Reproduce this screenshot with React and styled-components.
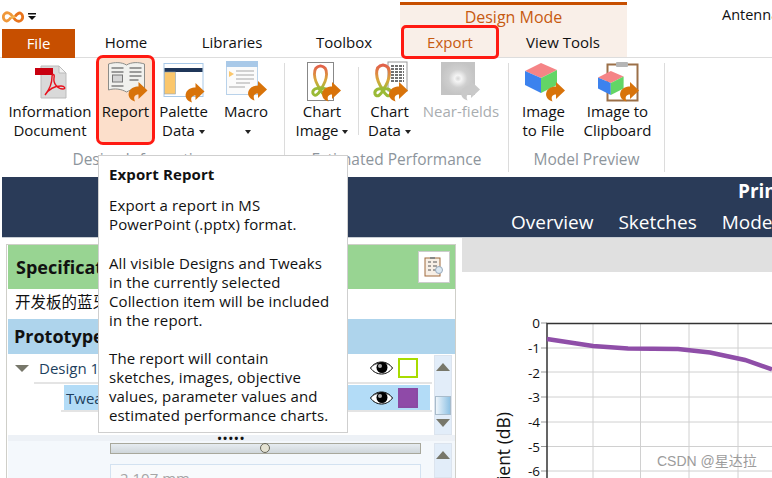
import React from 'react'
import styled, { createGlobalStyle } from 'styled-components'

const Global = createGlobalStyle`
  html, body { margin: 0; padding: 0; background: #fff; }
  body { font-family: "Open Sans", "Noto Sans CJK SC", sans-serif; color: #111; }
`

const Page = styled.div`
  position: relative;
  width: 772px;
  height: 478px;
  overflow: hidden;
  background: #fff;
`
const TitleBar = styled.div`
  height: 29px;
  display: flex;
  align-items: flex-start;
`
const QuickAccess = styled.div`
  flex: none;
  width: 400px;
  padding: 6px 0 0 2px;
  box-sizing: border-box;
`
const ContextHead = styled.div`
  flex: none;
  width: 227px;
  height: 24px;
  margin-top: 2px;
  border-top: 3px solid #c74f00;
  background: #f9efe8;
  color: #c75a10;
  font-size: 16px;
  line-height: 24px;
  text-align: center;
`
const AppName = styled.div`
  flex: none;
  margin: 5px 0 0 95px;
  font-size: 14.5px;
  line-height: 20px;
  white-space: nowrap;
`
const TabRow = styled.div`
  height: 28px;
  display: flex;
  border-bottom: 1px solid #ddd;
  padding-left: 2px;
`
const FileTab = styled.div`
  width: 73px;
  height: 29px;
  background: #c74f00;
  color: #fff;
  font-size: 15px;
  line-height: 28px;
  text-align: center;
`
const Tab = styled.div`
  position: relative;
  width: ${p => p.$w}px;
  font-size: 15px;
  line-height: 27px;
  text-align: center;
  white-space: nowrap;
  background: ${p => (p.$context ? '#f9efe8' : 'transparent')};
  color: ${p => (p.$current ? '#c75a10' : '#111')};
  ${p => p.$current && `
    &::after {
      content: "";
      position: absolute;
      left: 0; top: -4px; right: 0; bottom: -2px;
      border: 3px solid #ff1a12;
      border-radius: 5px;
    }
  `}
`
const Ribbon = styled.div`
  height: 114px;
  display: flex;
  padding-top: 4px;
  box-sizing: border-box;
`
const Group = styled.div`
  width: ${p => p.$w}px;
  display: flex;
  flex-direction: column;
  border-right: 1px solid #dcdcdc;
  box-sizing: border-box;
  margin-top: 1px;
`
const Buttons = styled.div`
  flex: 1;
  display: flex;
  padding-left: ${p => p.$pad || 0}px;
`
const GroupLabel = styled.div`
  height: 25px;
  color: #8d959c;
  font-size: 15.5px;
  line-height: 24px;
  text-align: center;
  white-space: nowrap;
`
const Btn = styled.div`
  position: relative;
  width: ${p => p.$w}px;
  margin-top: -1px;
  display: flex;
  flex-direction: column;
  align-items: center;
  ${p => p.$sep && `
    &::after {
      content: "";
      position: absolute;
      right: 0; top: 5px; height: 68px;
      border-right: 1px solid #dcdcdc;
    }
  `}
  ${p => p.$active && `
    &::before {
      content: "";
      position: absolute;
      left: 0; right: 0; top: -7px; height: 84px;
      background: #fcdfcb;
      border: 3px solid #ff1a12;
      border-radius: 7px;
    }
  `}
`
const IconBox = styled.div`
  position: relative;
  height: 40px;
`
const BtnLabel = styled.div`
  position: relative;
  font-size: 15px;
  line-height: 19px;
  text-align: center;
  white-space: nowrap;
  color: ${p => (p.$disabled ? '#a9adb0' : '#111')};
`
const Caret = styled.span`
  display: inline-block;
  width: 0;
  height: 0;
  margin-left: 4px;
  vertical-align: 2px;
  border-left: 3px solid transparent;
  border-right: 3px solid transparent;
  border-top: 4px solid #222;
`
const Band = styled.div`
  margin: 5px 0 0 2px;
  height: 60px;
  background: #2a3b58;
  color: #fff;
  overflow: hidden;
  border-bottom: 1px solid #c8cdd4;
`
const BandTitle = styled.div`
  padding: 2px 0 0 736px;
  font-size: 19px;
  font-weight: 700;
  line-height: 25px;
  white-space: nowrap;
`
const BandNav = styled.div`
  display: flex;
  gap: 25px;
  padding: 5px 0 0 509px;
  font-size: 19px;
  line-height: 26px;
  white-space: nowrap;
`
const Main = styled.div`
  display: flex;
  height: 240px;
`
const LeftPanel = styled.div`
  flex: none;
  width: 450px;
  margin: 6px 0 0 6px;
  border: 1px solid #cfcfc9;
  border-width: 1px 1px 0;
  box-sizing: border-box;
  display: flex;
  flex-direction: column;
  padding-left: 1px;
`
const SpecHead = styled.div`
  flex: none;
  height: 44px;
  background: #98d492;
  display: flex;
  align-items: center;
  justify-content: space-between;
  padding: 0 5px 0 8px;
  font-size: 18px;
  font-weight: 700;
`
const SpecButton = styled.div`
  width: 30px;
  height: 30px;
  border: 1px solid #ccc;
  background: #fff;
  display: flex;
  align-items: center;
  justify-content: center;
`
const SpecText = styled.div`
  flex: none;
  height: 30px;
  padding-left: 7px;
  font-size: 15.5px;
  line-height: 26px;
  white-space: nowrap;
`
const ProtoHead = styled.div`
  flex: none;
  height: 35px;
  background: #aed4ec;
  padding-left: 6px;
  font-size: 18px;
  font-weight: 700;
  line-height: 34px;
`
const TreeArea = styled.div`
  flex: none;
  height: 81px;
  display: flex;
`
const Tree = styled.div`
  flex: 1;
  padding-right: 1px;
`
const Row = styled.div`
  display: flex;
  align-items: center;
  height: ${p => p.$h}px;
  margin-left: ${p => p.$indent}px;
  padding: ${p => p.$pad};
  border-bottom: 2px solid #e4e4e4;
  color: #1d3f5e;
  font-size: 15px;
`
const RowFill = styled.div`
  flex: 1;
  display: flex;
  align-items: center;
  height: 100%;
  padding-left: ${p => p.$pl}px;
  background: ${p => (p.$selected ? '#b3dcf7' : 'transparent')};
`
const Expander = styled.span`
  width: 0;
  height: 0;
  margin: 0 10px 0 -24px;
  border-left: 7px solid transparent;
  border-right: 7px solid transparent;
  border-top: 7px solid #77776a;
`
const Grow = styled.span`
  flex: 1;
`
const Swatch = styled.span`
  width: 16px;
  height: 16px;
  margin: 0 12px 0 5px;
  border: 2px solid ${p => p.$border};
  background: ${p => p.$fill};
`
const Scroll = styled.div`
  flex: none;
  width: 16px;
  margin: ${p => p.$margin};
  border: 1px solid #dce4ee;
  background: #e2edf9;
  display: flex;
  flex-direction: column;
  align-items: center;
  justify-content: ${p => (p.$top ? 'flex-start' : 'space-between')};
  padding: 7px 0;
`
const ArrowUp = styled.span`
  width: 0;
  height: 0;
  border-left: 7px solid transparent;
  border-right: 7px solid transparent;
  border-bottom: 8px solid #77776a;
`
const ArrowDown = styled(ArrowUp)`
  border-bottom: 0;
  border-top: 8px solid #77776a;
`
const Thumb = styled.span`
  width: 14px;
  height: 17px;
  margin-top: 20px;
  border: 1px solid #a9bccb;
  background: linear-gradient(to right, #eef5fb, #8fc2e4);
`
const Splitter = styled.div`
  flex: none;
  height: 6px;
  background: #edf1f6;
  text-align: center;
  font-size: 11px;
  font-weight: 700;
  line-height: 5px;
  letter-spacing: 1.5px;
  overflow: hidden;
`
const Lower = styled.div`
  flex: 1;
  display: flex;
  background: #f4f8fc;
  min-height: 0;
`
const LowerBody = styled.div`
  flex: 1;
  padding: 2px 0 0 102px;
`
const Slider = styled.div`
  position: relative;
  width: 309px;
  height: 9px;
  border: 1px solid #a8a89c;
  background: linear-gradient(#e6ecf1, #cfd6da);
`
const SliderKnob = styled.span`
  position: absolute;
  left: 149px;
  top: -1px;
  width: 8px;
  height: 8px;
  border: 1.5px solid #66665a;
  border-radius: 50%;
  background: #e4e2d2;
`
const ValueBox = styled.div`
  width: 300px;
  height: 30px;
  margin-top: 10px;
  padding-left: 9px;
  border: 1px solid #d3e2f1;
  background: #f8fafc;
  color: #a5a5a5;
  font-size: 15px;
  line-height: 26px;
`
const RightPanel = styled.div`
  flex: 1;
  margin-left: 6px;
  min-width: 0;
`
const GrayBand = styled.div`
  height: 34px;
  background: #e0e0e0;
`
const Tooltip = styled.div`
  position: absolute;
  left: 98px;
  top: 155px;
  width: 228px;
  height: 256px;
  padding: 9px 10px 11px;
  background: #fff;
  border: 1px solid #cfcfcf;
  font-size: 15px;
  letter-spacing: 0.12px;
  line-height: 19px;
  white-space: nowrap;
`
const TipTitle = styled.div`
  font-weight: 700;
  margin-bottom: 12px;
`
const TipPara = styled.p`
  margin: 0 0 19.5px;
`
const Watermark = styled.div`
  position: absolute;
  left: 657px;
  top: 452px;
  color: #9c9c9c;
  font-family: "Liberation Sans", "Noto Sans CJK SC", sans-serif;
  font-size: 14px;
  line-height: 18px;
`

const PageIcon = ({ cx, children }) => (
  <IconBox>
    <svg width="52" height="40" viewBox={`${cx - 26} 62 52 40`} style={{ display: 'block', overflow: 'visible' }}>{children}</svg>
  </IconBox>
)

const Bounce = ({ x, y, s = 1, fill = '#d8730a' }) => (
  <path
    transform={`translate(${x} ${y}) scale(${s})`}
    fill={fill}
    d="M11 0L20 8.5L11 17V12.5C7.5 12.5 5.500 14.500 7.500 19.500C2.500 18 0 14 1.500 10C3 6 7 4.500 11 4.500Z"
  />
)

const Loop = ({ x, y, s = 1 }) => (
  <g transform={`translate(${x} ${y}) scale(${s})`} fill="none" strokeWidth="3">
    <path d="M10 27C2 16 1 3 10 2C19 3 18 16 10 27" stroke="url(#loopGrad)" />
    <path d="M10 27C6 24 1 27 2 31C4 35 8 32 10 27C12 32 16 35 18 31C19 27 14 24 10 27" stroke="#9aba36" />
  </g>
)

const Cube = ({ x, y, s = 1 }) => (
  <g transform={`translate(${x} ${y}) scale(${s})`}>
    <path d="M0 8L16 0L32 7L16 15Z" fill="#f58486" />
    <path d="M0 8L16 15V30L0 22Z" fill="#3c82ee" />
    <path d="M16 15L32 7V22L16 30Z" fill="#63d566" />
  </g>
)

const Eye = () => (
  <svg width="23" height="16" viewBox="0 0 23 16">
    <path d="M0.500 8C6 0 17 0 22.500 8C17 16 6 16 0.500 8Z" fill="#fff" stroke="#000" strokeWidth="1" />
    <path d="M1 8C6 0.500 17 0.500 22 8C19 5 18 3.500 11.500 3.500C6 3.500 4 5 1 8Z" fill="#000" />
    <circle cx="12" cy="7.500" r="5.500" fill="#000" />
    <circle cx="10" cy="6" r="2" fill="#aaa" />
  </svg>
)

const Logo = () => (
  <svg width="22" height="12" viewBox="0 0 22 12" fill="none" strokeWidth="2.800">
    <path d="M11 6C8 1.500 5 1 3 2.500C0.500 4.500 1 8 3 9.500C5 11 7.500 8.500 9 6.500" stroke="#f0983a" />
    <path d="M11 6C14 10.500 17 11 19 9.500C21.500 7.500 21 4 19 2.500C17 1 14.500 3.500 13 5.500" stroke="#e8741c" />
    <path d="M9 6.500L11 6L13 5.500" stroke="#f3b14a" />
  </svg>
)

const QuickCaret = () => (
  <svg width="10" height="10" viewBox="0 0 10 10" style={{ marginLeft: 3, verticalAlign: 1 }}>
    <rect x="1" y="1" width="8" height="1.500" fill="#111" />
    <path d="M1 4H9L5 8Z" fill="#111" />
  </svg>
)

const SpecIcon = () => (
  <svg width="20" height="22" viewBox="0 0 20 22">
    <rect x="1" y="2" width="15" height="18" fill="#f7efe6" stroke="#a06a3c" />
    <rect x="6" y="1" width="5" height="2" fill="#888" />
    <path d="M4 6H7M9 6H13M4 10H7M9 10H13M4 14H7M9 14H13" stroke="#555" />
    <circle cx="15" cy="14" r="3.500" fill="#dbe8f2" stroke="#9ab" />
  </svg>
)

export default function App() {
  return (
    <Page>
      <Global />
      <svg width="0" height="0" style={{ position: 'absolute' }}>
        <defs>
          <linearGradient id="loopGrad" x1="0" y1="0" x2="0" y2="1">
            <stop offset="0" stopColor="#e2604a" />
            <stop offset="0.6" stopColor="#d9a83c" />
            <stop offset="1" stopColor="#9aba36" />
          </linearGradient>
          <radialGradient id="nearGrad">
            <stop offset="0" stopColor="#d6d6d6" />
            <stop offset="0.2" stopColor="#f4f4f4" />
            <stop offset="0.55" stopColor="#cfcfcf" />
            <stop offset="1" stopColor="#c4c4c4" />
          </radialGradient>
        </defs>
      </svg>

      <TitleBar>
        <QuickAccess><Logo /><QuickCaret /></QuickAccess>
        <ContextHead>Design Mode</ContextHead>
        <AppName>Antenna Magus</AppName>
      </TitleBar>

      <TabRow>
        <FileTab>File</FileTab>
        <Tab $w={102}>Home</Tab>
        <Tab $w={110}>Libraries</Tab>
        <Tab $w={114}>Toolbox</Tab>
        <Tab $w={98} $context $current>Export</Tab>
        <Tab $w={128} $context>View Tools</Tab>
      </TabRow>

      <Ribbon>
        <Group $w={285}>
          <Buttons $pad={4}>
            <Btn $w={92}>
              <PageIcon cx={51}>
                <path d="M42 66H60L67 73V98H42Z" fill="#d9d9d9" stroke="#bbb" />
                <path d="M60 66V73H67Z" fill="#f2f2f2" stroke="#bbb" />
                <rect x="36" y="68" width="18" height="7" fill="#c80010" />
                <path d="M46 95C50 90 53 84 53 77C53 73 56 74 55 78C54 84 59 89 64 89C67 89 66 86 62 86C56 86 50 89 46 95Z" fill="none" stroke="#e8101c" strokeWidth="1.400" />
              </PageIcon>
              <BtnLabel>Information<br />Document</BtnLabel>
            </Btn>
            <Btn $w={59} $active>
              <PageIcon cx={125.500}>
                <path d="M108 64C114 62 121 62 126 65C131 62 138 62 144 64V90C138 88 131 89 126 92C121 89 114 88 108 90Z" fill="#f1f1ee" stroke="#8c8c88" />
                <path d="M111 68H123M111 72H123M129 68H141M129 72H141M129 76H141M129 80H138M111 86H123" stroke="#7f7f7f" strokeWidth="1.600" />
                <rect x="112" y="75" width="10" height="7" fill="#d5d5d5" stroke="#777" />
                <Bounce x={127} y={82} />
              </PageIcon>
              <BtnLabel>Report</BtnLabel>
            </Btn>
            <Btn $w={57}>
              <PageIcon cx={183.500}>
                <rect x="163.500" y="63.500" width="39" height="33" fill="#fff" stroke="#a9c9e8" />
                <rect x="164" y="68" width="38" height="4" fill="#1f3659" />
                <rect x="164" y="72" width="11" height="22" fill="#fbc76c" stroke="#8ca6bd" strokeWidth="0.600" />
                <Bounce x={184} y={83} />
              </PageIcon>
              <BtnLabel>Palette<br />Data<Caret /></BtnLabel>
            </Btn>
            <Btn $w={68}>
              <PageIcon cx={246}>
                <rect x="226.500" y="61.500" width="31" height="33" fill="#fbfbfb" stroke="#b9d2ea" />
                <rect x="226" y="61" width="32" height="6" fill="#a9c9e8" />
                <path d="M229 71L234 74L229 77Z" fill="#fbc76c" />
                <path d="M236 71H254M236 75H254M236 79H254M236 83H250M229 87H245" stroke="#a8a8a8" strokeWidth="1.200" />
                <Bounce x={247} y={81} />
              </PageIcon>
              <BtnLabel>Macro<br /><Caret /></BtnLabel>
            </Btn>
          </Buttons>
          <GroupLabel>Design Information</GroupLabel>
        </Group>

        <Group $w={224}>
          <Buttons>
            <Btn $w={74} $sep>
              <PageIcon cx={37 + 285}>
                <rect x="307.500" y="62.500" width="26" height="38" fill="#fff" stroke="#888" />
                <Loop x={311} y={64} s={0.950} />
                <Bounce x={321} y={82} />
              </PageIcon>
              <BtnLabel>Chart<br />Image<Caret /></BtnLabel>
            </Btn>
            <Btn $w={61}>
              <PageIcon cx={390}>
                <rect x="388" y="62" width="19" height="29" fill="#fff" stroke="#999" />
                <path d="M391 66H404M391 69H404M391 72H404M391 75H404M391 78H404M391 81H404" stroke="#444" strokeWidth="1.600" strokeDasharray="3 1" />
                <Loop x={373} y={63} />
                <Bounce x={388} y={82} />
              </PageIcon>
              <BtnLabel>Chart<br />Data<Caret /></BtnLabel>
            </Btn>
            <Btn $w={82}>
              <PageIcon cx={461}>
                <rect x="441" y="62" width="34" height="33" fill="url(#nearGrad)" />
                <Bounce x={460} y={81} fill="#c9c9c9" />
              </PageIcon>
              <BtnLabel $disabled>Near-fields</BtnLabel>
            </Btn>
          </Buttons>
          <GroupLabel>Estimated Performance</GroupLabel>
        </Group>

        <Group $w={156}>
          <Buttons>
            <Btn $w={69}>
              <PageIcon cx={543}>
                <Cube x={524} y={63} />
                <Bounce x={544} y={82} />
              </PageIcon>
              <BtnLabel>Image<br />to File</BtnLabel>
            </Btn>
            <Btn $w={79}>
              <PageIcon cx={617}>
                <rect x="606.500" y="64.500" width="30" height="36" fill="#fff" stroke="#9c7048" strokeWidth="2" />
                <rect x="615" y="62" width="12" height="5" rx="1" fill="#b5b5b5" />
                <Cube x={597} y={71} s={0.800} />
                <Bounce x={618} y={82} />
              </PageIcon>
              <BtnLabel>Image to<br />Clipboard</BtnLabel>
            </Btn>
          </Buttons>
          <GroupLabel>Model Preview</GroupLabel>
        </Group>
      </Ribbon>

      <Band>
        <BandTitle>Printed Monopole</BandTitle>
        <BandNav>
          <span>Overview</span>
          <span>Sketches</span>
          <span>Model</span>
        </BandNav>
      </Band>

      <Main>
        <LeftPanel>
          <SpecHead>
            <span>Specifications</span>
            <SpecButton><SpecIcon /></SpecButton>
          </SpecHead>
          <SpecText>开发板的蓝牙天线</SpecText>
          <ProtoHead>Prototypes</ProtoHead>
          <TreeArea>
            <Tree>
              <Row $h={28} $indent={26} $pad="0 2px 0 5px">
                <RowFill $pl={0}>
                  <Expander />
                  Design 1
                  <Grow />
                  <Eye />
                  <Swatch $border="#a8dc00" $fill="#fff" />
                </RowFill>
              </Row>
              <Row $h={25} $indent={53} $pad="1px 2px 0 3px">
                <RowFill $selected $pl={2}>
                  Tweak 1
                  <Grow />
                  <Eye />
                  <Swatch $border="#8a4aa4" $fill="#8f4aa8" />
                </RowFill>
              </Row>
            </Tree>
            <Scroll $margin="1px 3px 0 1px">
              <ArrowUp />
              <Thumb />
              <ArrowDown />
            </Scroll>
          </TreeArea>
          <Splitter>•••••</Splitter>
          <Lower>
            <LowerBody>
              <Slider><SliderKnob /></Slider>
              <ValueBox>2.107 mm</ValueBox>
            </LowerBody>
            <Scroll $top $margin="2px 3px 0 0">
              <ArrowUp />
            </Scroll>
          </Lower>
        </LeftPanel>

        <RightPanel>
          <GrayBand />
          <svg width="310" height="206" viewBox="462 272 310 206" style={{ display: 'block' }}>
            <g stroke="#d0d0d0" strokeWidth="1">
              {[348, 372, 397, 422, 446.500, 471].map(y => <line key={y} x1="547" x2="772" y1={y} y2={y} />)}
              {[593, 640.500, 689, 738].map(x => <line key={x} y1="323" y2="478" x1={x} x2={x} />)}
            </g>
            <g stroke="#999" strokeWidth="1">
              {[323, 348, 372, 397, 422, 446.500, 471].map(y => <line key={y} x1="541" x2="547" y1={y} y2={y} />)}
            </g>
            <path d="M547 478V323.500H772" fill="none" stroke="#333" strokeWidth="1.500" />
            <path d="M547 339L593 346L628 348.500L678 349L710 352.500L745 360L772 369.500" fill="none" stroke="#8f4ea8" strokeWidth="4.500" />
            <g fontFamily="'Open Sans', sans-serif" fontSize="13.500" fill="#111" textAnchor="end">
              {[0, -1, -2, -3, -4, -5, -6].map((v, i) => (
                <text key={v} x="540" y={[328, 353, 378, 402, 427, 452, 476][i]}>{v}</text>
              ))}
              <text x="510" y="412" transform="rotate(-90 510 412)" fontSize="17.500">Reflection Coefficient (dB)</text>
            </g>
          </svg>
        </RightPanel>
      </Main>

      <Tooltip>
        <TipTitle>Export Report</TipTitle>
        <TipPara>Export a report in MS<br />PowerPoint (.pptx) format.</TipPara>
        <TipPara>All visible Designs and Tweaks<br />in the currently selected<br />Collection item will be included<br />in the report.</TipPara>
        <TipPara>The report will contain<br />sketches, images, objective<br />values, parameter values and<br />estimated performance charts.</TipPara>
      </Tooltip>
      <Watermark>CSDN @星达拉</Watermark>
    </Page>
  )
}
